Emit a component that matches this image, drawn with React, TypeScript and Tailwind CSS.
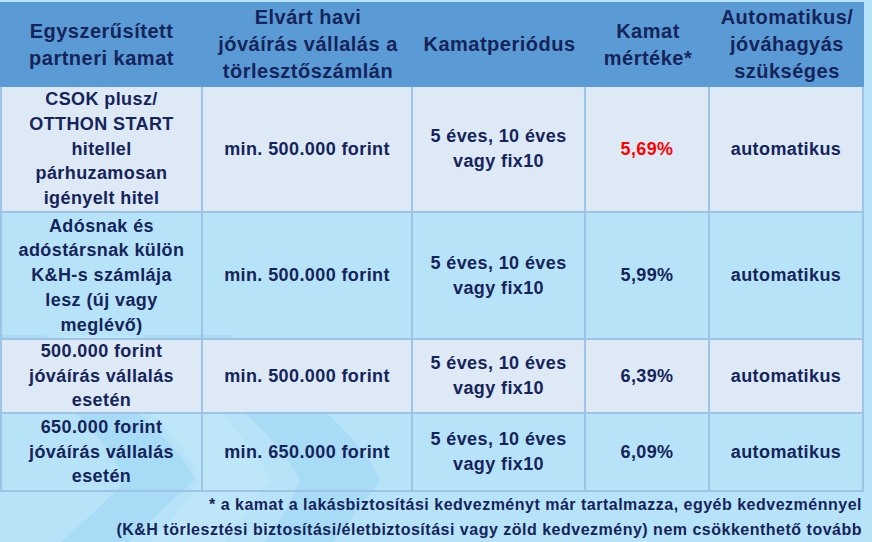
import React from "react";

const head = [
  ["Egyszerűsített", "partneri kamat"],
  ["Elvárt havi", "jóváírás vállalás a", "törlesztőszámlán"],
  ["Kamatperiódus"],
  ["Kamat", "mértéke*"],
  ["Automatikus/", "jóváhagyás", "szükséges"],
];

type Row = {
  name: string[];
  min: string;
  rate: string;
  red?: boolean;
  shaded: boolean;
};

const rows: Row[] = [
  {
    name: ["CSOK plusz/", "OTTHON START", "hitellel", "párhuzamosan", "igényelt hitel"],
    min: "min. 500.000 forint",
    rate: "5,69%",
    red: true,
    shaded: true,
  },
  {
    name: ["Adósnak és", "adóstársnak külön", "K&H-s számlája", "lesz (új vagy", "meglévő)"],
    min: "min. 500.000 forint",
    rate: "5,99%",
    shaded: false,
  },
  {
    name: ["500.000 forint", "jóváírás vállalás", "esetén"],
    min: "min. 500.000 forint",
    rate: "6,39%",
    shaded: true,
  },
  {
    name: ["650.000 forint", "jóváírás vállalás", "esetén"],
    min: "min. 650.000 forint",
    rate: "6,09%",
    shaded: false,
  },
];

function Lines({ lines }: { lines: string[] }) {
  return (
    <>
      {lines.map((l, i) => (
        <span key={i} className="block whitespace-nowrap">
          {l}
        </span>
      ))}
    </>
  );
}

export default function App() {
  const cell =
    "flex items-center justify-center text-center border-r-2 border-b-2 border-[#9dc3e6] text-[18px] leading-[24.7px] tracking-[0.4px]";

  return (
    <div
      className="relative w-[872px] h-[542px] overflow-hidden bg-[#b7e3f8] font-bold text-[#15245a]"
      style={{ fontFamily: '"Liberation Sans", Arial, sans-serif' }}
    >
      {/* faint chevron bands in the backdrop */}
      <svg className="absolute inset-0" width="872" height="542" viewBox="0 0 872 542">
        <path
          d="M-20 335 L45 335 Q180 440 195 480 Q150 520 110 560 L40 560 Q110 500 125 480 Q100 420 -20 335 Z"
          fill="#a8dcf6"
        />
        <path
          d="M140 335 L230 335 Q360 430 380 480 Q350 520 320 560 L250 560 Q290 510 300 480 Q270 420 140 335 Z"
          fill="#a8dcf6"
        />
        <path
          d="M60 335 L130 335 Q250 430 270 480 Q240 520 210 560 L130 560 Q190 505 200 480 Q180 425 60 335 Z"
          fill="#bde7f9"
        />
      </svg>

      <div className="relative pt-[2px]">
        <div className="grid w-[864px] grid-cols-[203px_210px_173px_124px_154px] grid-rows-[85px_126px_127px_74px_78px]">
          {head.map((h, i) => (
            <div
              key={i}
              className="flex items-center justify-center text-center bg-[#5b9bd5] text-[20px] leading-[27px] tracking-[0.5px]"
            >
              <div>
                <Lines lines={h} />
              </div>
            </div>
          ))}

          {rows.map((r, i) => {
            const bg = r.shaded ? "bg-[#dde9f5]" : "";
            return (
              <React.Fragment key={i}>
                <div className={`${cell} ${bg} border-l-2`}>
                  <div>
                    <Lines lines={r.name} />
                  </div>
                </div>
                <div className={`${cell} ${bg}`}>{r.min}</div>
                <div className={`${cell} ${bg}`}>
                  <div>
                    <Lines lines={["5 éves, 10 éves", "vagy fix10"]} />
                  </div>
                </div>
                <div className={`${cell} ${bg} ${r.red ? "text-[#ff0000]" : ""}`}>{r.rate}</div>
                <div className={`${cell} ${bg}`}>automatikus</div>
              </React.Fragment>
            );
          })}
        </div>

        <div className="pr-[10px] text-right text-[16px] leading-[25px] tracking-[0.5px]">
          <p>* a kamat a lakásbiztosítási kedvezményt már tartalmazza, egyéb kedvezménnyel</p>
          <p>(K&amp;H törlesztési biztosítási/életbiztosítási vagy zöld kedvezmény) nem csökkenthető tovább</p>
        </div>
      </div>
    </div>
  );
}
